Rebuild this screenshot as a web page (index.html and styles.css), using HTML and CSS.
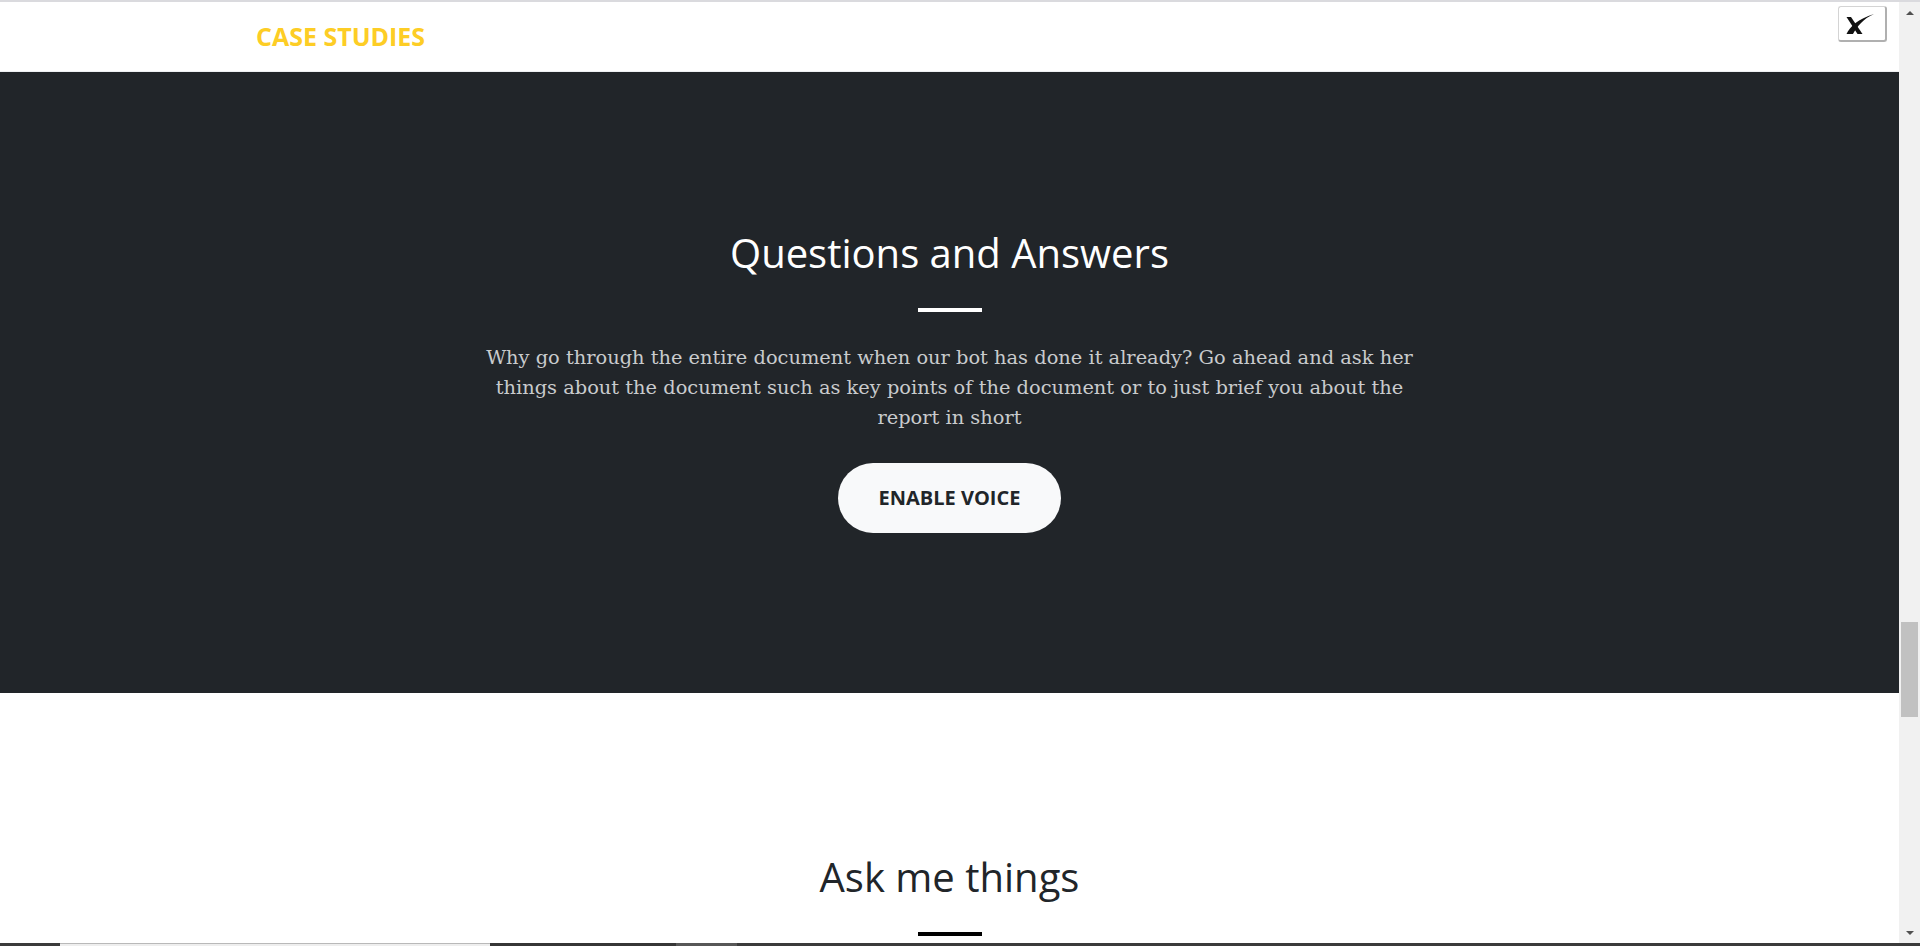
FILE: index.html
```html
<!DOCTYPE html>
<html lang="en">
<head>
<meta charset="utf-8">
<title>Questions and Answers</title>
<link rel="stylesheet" href="styles.css">
</head>
<body>
<div class="topline"></div>
<div class="frame">
  <main class="page">
    <header class="case-bar">
      <div class="container">
        <a class="case-link" href="#">CASE STUDIES</a>
      </div>
    </header>
    <section class="section section-dark">
      <div class="container center">
        <h2 class="title title-light">Questions and Answers</h2>
        <hr class="divider divider-light">
        <p class="lead-text">Why go through the entire document when our bot has done it already? Go ahead and ask her things about the document such as key points of the document or to just brief you about the report in short</p>
        <a class="btn-pill" href="#">Enable Voice</a>
      </div>
    </section>
    <section class="section section-light">
      <div class="container center">
        <h2 class="title">Ask me things</h2>
        <hr class="divider">
      </div>
    </section>
    <button class="close-btn" type="button" aria-label="Close">
      <svg width="46" height="33" viewBox="0 0 46 33" aria-hidden="true">
        <path d="M7.5 27 C11 19.5 19 12 35 7 C24 12 18.5 19 14 27 Z" fill="#111"/>
        <path d="M7.5 10 L12 10 L23.5 27 L18.5 27 Z" fill="#111"/>
      </svg>
    </button>
  </main>
  <aside class="scrollbar">
    <span class="arrow arrow-up"></span>
    <div class="track"><div class="thumb"></div></div>
    <span class="arrow arrow-down"></span>
  </aside>
</div>
<div class="taskbar">
  <span class="seg seg-a"></span>
  <span class="seg seg-b"></span>
  <span class="seg seg-c"></span>
  <span class="seg seg-d"></span>
  <span class="seg seg-e"></span>
</div>
</body>
</html>
```

FILE: styles.css
```css
* { box-sizing: border-box; }

html, body {
  margin: 0;
  height: 946px;
  overflow: hidden;
  background: #ffffff;
}

body {
  display: flex;
  flex-direction: column;
  font-family: "Open Sans", "Liberation Sans", sans-serif;
  color: #212529;
}

.topline {
  height: 2px;
  background: #dadade;
  flex: none;
}

.frame {
  flex: 1;
  display: flex;
  min-height: 0;
}

.page {
  flex: 1;
  position: relative;
  overflow: hidden;
  background: #ffffff;
}

.container {
  max-width: 1425px;
  margin: 0 auto;
  padding: 0 19px;
}

.center { text-align: center; }

.case-bar {
  height: 70px;
  padding-top: 19px;
  border-bottom: 1px solid #eef0f2;
}

.case-link {
  font-family: "Open Sans", sans-serif;
  font-weight: 700;
  font-size: 25px;
  line-height: 30px;
  color: #fdcd25;
  text-decoration: none;
}

.section-dark {
  background: #212529;
  padding: 157px 0 160px;
}

.section-light {
  padding: 160px 0 160px;
}

.title {
  margin: 0;
  font-family: "Open Sans", sans-serif;
  font-weight: 400;
  font-size: 40px;
  line-height: 48px;
  color: #212529;
}

.title-light { color: #ffffff; }

.divider {
  width: 64px;
  height: 4px;
  margin: 31px auto 30px;
  border: 0;
  background: #000000;
}

.divider-light { background: #ffffff; }

.lead-text {
  max-width: 950px;
  margin: 0 auto 30px;
  padding-top: 1px;
  font-family: "DejaVu Serif", "Liberation Serif", serif;
  font-size: 19.4px;
  line-height: 30px;
  color: #c9cbcd;
}

.btn-pill {
  display: inline-block;
  padding: 20px 41px;
  border-radius: 35px;
  background: #f8f9fa;
  color: #212529;
  font-family: "Open Sans", sans-serif;
  font-weight: 700;
  font-size: 20px;
  line-height: 30px;
  text-transform: uppercase;
  text-decoration: none;
}

.close-btn {
  position: absolute;
  top: 4px;
  right: 12px;
  width: 49px;
  height: 36px;
  padding: 0;
  background: #ffffff;
  border: 1px solid #d4d4d4;
  border-right: 2px solid #b0b0b0;
  border-bottom: 2px solid #b0b0b0;
  border-radius: 3px;
  display: flex;
  align-items: center;
  justify-content: center;
}

.close-btn svg { display: block; }

.scrollbar {
  width: 21px;
  flex: none;
  background: #f1f1f1;
  display: flex;
  flex-direction: column;
  align-items: center;
}

.arrow {
  width: 0;
  height: 0;
  border-left: 4px solid transparent;
  border-right: 4px solid transparent;
  flex: none;
}

.arrow-up {
  margin-top: 9px;
  border-bottom: 4px solid #505050;
}

.arrow-down {
  margin-bottom: 8px;
  border-top: 4px solid #505050;
}

.track {
  flex: 1;
  width: 100%;
  padding: 0 2px;
}

.thumb {
  margin-top: 607px;
  height: 95px;
  background: #c1c1c1;
}

.taskbar {
  height: 3px;
  flex: none;
  display: flex;
}

.seg { display: block; height: 3px; }
.seg-a { width: 60px; background: #3b3b3b; }
.seg-b { width: 430px; background: #eeeeee; border-top: 1px solid #b9b9b9; }
.seg-c { width: 186px; background: #363636; }
.seg-d { width: 61px; background: #575757; }
.seg-e { flex: 1; background: #3b3b3b; }
```
